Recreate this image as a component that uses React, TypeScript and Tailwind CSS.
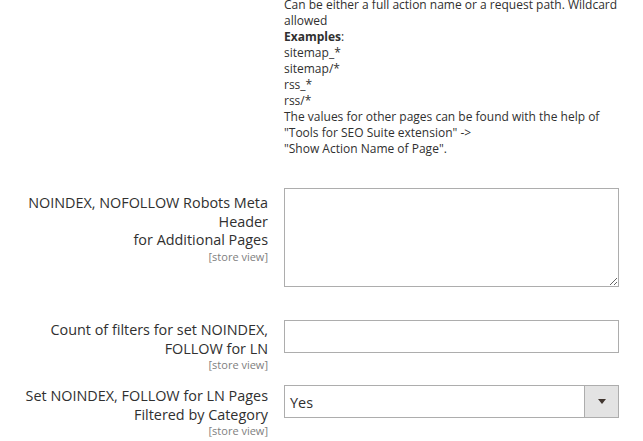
const font = { fontFamily: '"Open Sans", "Liberation Sans", sans-serif' };

function FieldLabel({ lines, pad }: { lines: string[]; pad: string }) {
  return (
    <div className={`text-right text-[14.4px] leading-[18.5px] text-[#303030] ${pad}`}>
      {lines.map((l, i) => (
        <div key={i}>{l}</div>
      ))}
      <div className="text-[11px] leading-[13px] text-[#808080]">[store view]</div>
    </div>
  );
}

export default function App() {
  return (
    <div className="min-h-screen bg-white" style={font}>
      <div className="grid grid-cols-[268px_335px] gap-x-4">
        <div />
        <div className="-mt-[3px] text-[12px] leading-[16px] text-[#303030]">
          <div>Can be either a full action name or a request path. Wildcard allowed</div>
          <div>
            <strong className="font-bold">Examples</strong>:
          </div>
          <div>sitemap_*</div>
          <div>sitemap/*</div>
          <div>rss_*</div>
          <div>rss/*</div>
          <div>The values for other pages can be found with the help of</div>
          <div>"Tools for SEO Suite extension" -&gt;</div>
          <div>"Show Action Name of Page".</div>
        </div>
      </div>

      <div className="mt-[31px] grid grid-cols-[268px_335px] items-start gap-x-4">
        <FieldLabel lines={["NOINDEX, NOFOLLOW Robots Meta", "Header", "for Additional Pages"]} pad="pt-[6px]" />
        <textarea className="block h-[99px] w-full border border-[#adadad] bg-white outline-none" />
      </div>

      <div className="mt-[33px] grid grid-cols-[268px_335px] items-start gap-x-4">
        <FieldLabel lines={["Count of filters for set NOINDEX,", "FOLLOW for LN"]} pad="pt-[1px]" />
        <input type="text" className="block h-[33px] w-full border border-[#adadad] bg-white outline-none" />
      </div>

      <div className="mt-[13px] grid grid-cols-[268px_335px] items-start gap-x-4">
        <FieldLabel lines={["Set NOINDEX, FOLLOW for LN Pages", "Filtered by Category"]} pad="pt-[3px]" />
        <div className="mt-[1px] flex h-[33px] w-full border border-[#adadad] bg-white">
          <div className="flex flex-1 items-center pl-[5px] pt-[2px] text-[14.4px] text-[#303030]">Yes</div>
          <div className="flex w-[34px] items-center justify-center border-l border-[#adadad] bg-[#e3e3e3]">
            <div className="h-0 w-0 border-x-[4px] border-t-[5px] border-x-transparent border-t-[#41362f]" />
          </div>
        </div>
      </div>
    </div>
  );
}
